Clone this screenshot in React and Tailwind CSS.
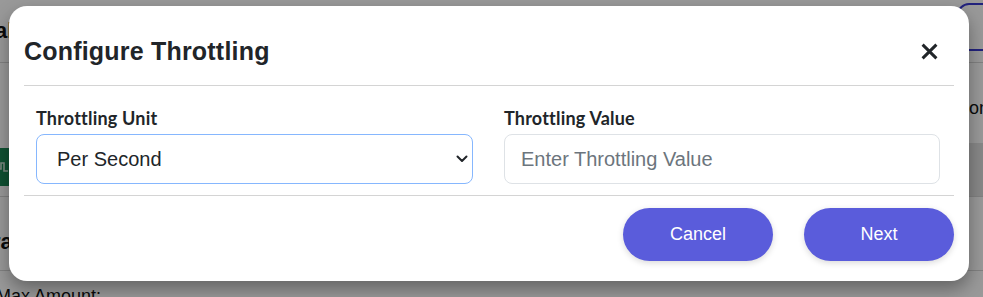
import React from "react";

function BackgroundPage() {
  return (
    <div className="absolute inset-0 bg-white font-['Liberation_Sans',Arial,sans-serif] text-[#111]">
      <div className="flex h-[63px] items-start justify-between border-b border-[#d8d8d8]">
        <div className="ml-[-5px] mt-[14px] text-[22px] font-bold">al</div>
        <div className="mt-[3px] h-[48px] w-[60px] mr-[-34px] rounded-[12px] border-2 border-[#3a3ad0]" />
      </div>
      <div className="flex h-[80px] justify-end">
        <div className="mr-[-6px] mt-[32px] text-[18px]">on</div>
      </div>
      <div className="flex h-[54px] items-stretch justify-between border-b border-[#d8d8d8]">
        <div className="mt-[5px] mb-[10px] ml-[-20px] flex w-[30px] items-center justify-end bg-[#198754] pr-[2px]">
          <svg width="10" height="16" viewBox="0 0 10 16" fill="none" stroke="#cde5d8" strokeWidth="1.6">
            <path d="M0 10 H3 V4 H6 V12 H10" />
          </svg>
        </div>
        <div className="w-[30px] bg-[#e3e3e3]" />
      </div>
      <div className="flex h-[74px] items-end border-b border-[#d8d8d8] pb-[12px]">
        <div className="ml-[-8px] text-[22px] font-bold">ra</div>
      </div>
      <div className="ml-[-4px] mt-[12px] text-[18px]">Max Amount:</div>
    </div>
  );
}

export default function App() {
  return (
    <div className="relative h-[297px] w-full overflow-hidden">
      <BackgroundPage />
      <div className="absolute inset-0 bg-black/40" />
      <div className="absolute left-[9px] top-[6px] w-[960px] rounded-[18px] bg-white shadow-[0_8px_18px_rgba(0,0,0,0.35)]">
        <div className="px-[15px] pt-[12px]">
          <div className="flex h-[68px] items-center justify-between border-b border-[#d4d4d4]">
            <h2 className="font-['Liberation_Sans',Arial,sans-serif] text-[25px] font-bold tracking-[0.2px] text-[#212529]">
              Configure Throttling
            </h2>
            <button className="mr-[15px] flex h-[20px] w-[20px] items-center justify-center text-[#212529]" aria-label="Close">
              <svg width="17" height="17" viewBox="0 0 16 16" fill="none" stroke="currentColor" strokeWidth="2.8" strokeLinecap="butt">
                <path d="M1.5 1.5 L14.5 14.5 M14.5 1.5 L1.5 14.5" />
              </svg>
            </button>
          </div>
          <div className="grid grid-cols-[437px_436px] gap-x-[31px] border-b border-[#d4d4d4] px-[12px] pt-[20px] pb-[11px]">
            <div className="flex flex-col">
              <label className="mb-[4px] font-['Lato',sans-serif] text-[18px] font-bold leading-[24px] tracking-[0.2px] text-[#212529]">
                Throttling Unit
              </label>
              <div className="relative">
                <select
                  defaultValue="second"
                  className="h-[50px] w-full appearance-none rounded-[8px] border border-[#86b7fe] bg-white pl-[20px] font-['Liberation_Sans',Arial,sans-serif] text-[20px] text-[#212529] outline-none"
                >
                  <option value="second">Per Second</option>
                  <option value="minute">Per Minute</option>
                  <option value="hour">Per Hour</option>
                </select>
                <svg className="pointer-events-none absolute right-[5px] top-[21px]" width="12" height="8" viewBox="0 0 12 8" fill="none" stroke="#212529" strokeWidth="2" strokeLinecap="round" strokeLinejoin="round">
                  <path d="M1.5 1.5 L6 6 L10.5 1.5" />
                </svg>
              </div>
            </div>
            <div className="flex flex-col">
              <label className="mb-[4px] font-['Lato',sans-serif] text-[18px] font-bold leading-[24px] tracking-[0.2px] text-[#212529]">
                Throttling Value
              </label>
              <input
                type="text"
                placeholder="Enter Throttling Value"
                className="h-[50px] w-full rounded-[8px] border border-[#dee2e6] bg-white pl-[16px] font-['Liberation_Sans',Arial,sans-serif] text-[20px] text-[#212529] outline-none placeholder:text-[#6c757d]"
              />
            </div>
          </div>
          <div className="flex justify-end gap-[31px] pt-[12px] pb-[20px]">
            <button className="h-[53px] w-[150px] rounded-full bg-[#5a5cdb] font-['Liberation_Sans',Arial,sans-serif] text-[18px] text-white shadow-[0_2px_6px_rgba(0,0,0,0.15)]">
              Cancel
            </button>
            <button className="h-[53px] w-[150px] rounded-full bg-[#5a5cdb] font-['Liberation_Sans',Arial,sans-serif] text-[18px] text-white shadow-[0_2px_6px_rgba(0,0,0,0.15)]">
              Next
            </button>
          </div>
        </div>
      </div>
    </div>
  );
}
